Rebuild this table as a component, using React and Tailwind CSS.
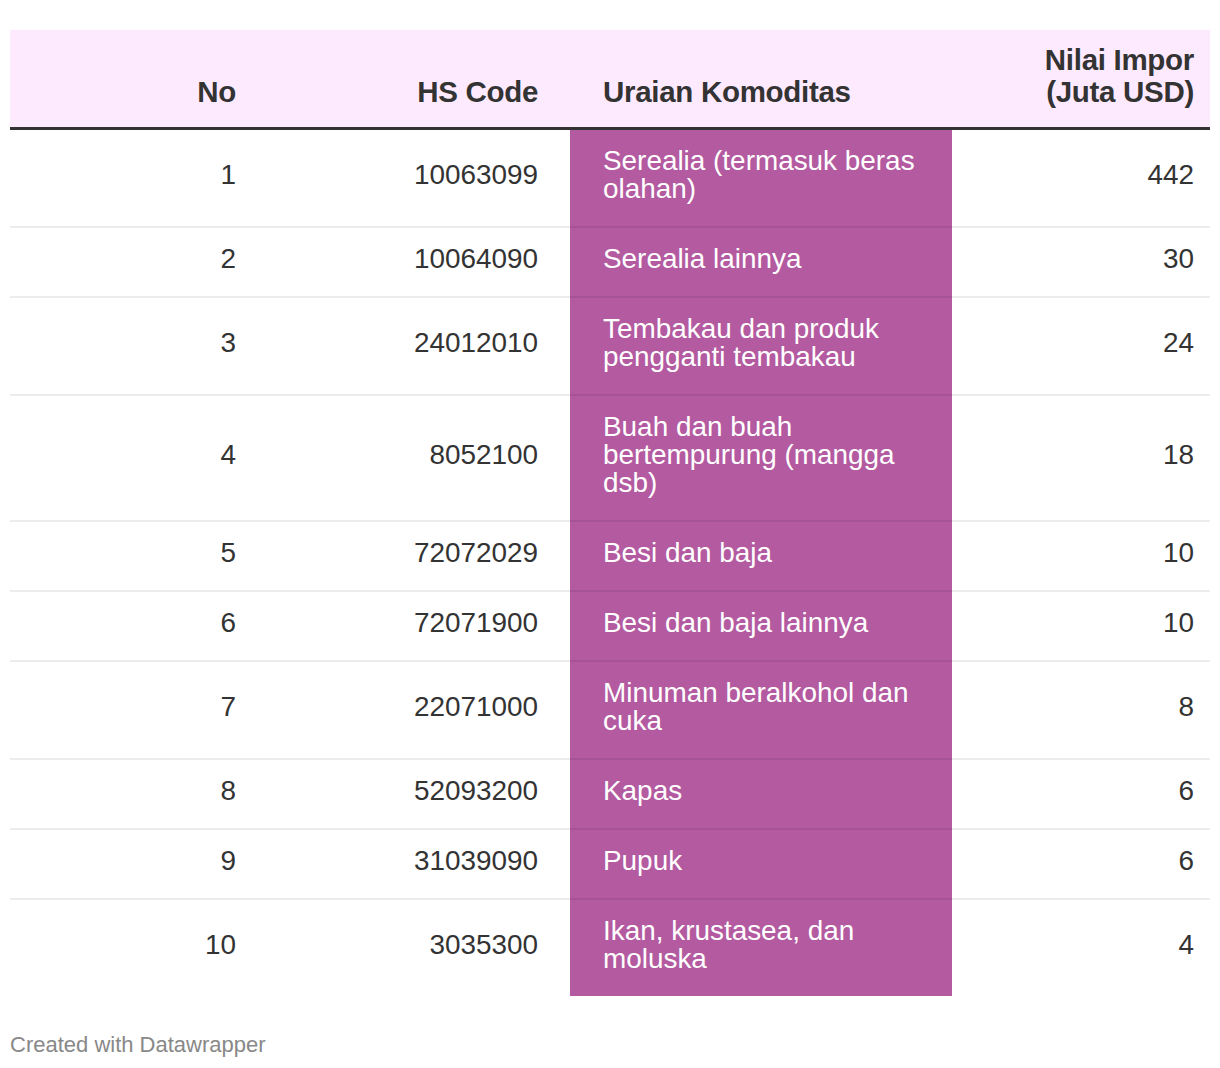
import React from "react";

const rows = [
  ["1", "10063099", "Serealia (termasuk beras olahan)", "442"],
  ["2", "10064090", "Serealia lainnya", "30"],
  ["3", "24012010", "Tembakau dan produk pengganti tembakau", "24"],
  ["4", "8052100", "Buah dan buah bertempurung (mangga dsb)", "18"],
  ["5", "72072029", "Besi dan baja", "10"],
  ["6", "72071900", "Besi dan baja lainnya", "10"],
  ["7", "22071000", "Minuman beralkohol dan cuka", "8"],
  ["8", "52093200", "Kapas", "6"],
  ["9", "31039090", "Pupuk", "6"],
  ["10", "3035300", "Ikan, krustasea, dan moluska", "4"],
];

export default function App() {
  return (
    <div
      className="w-[1220px] h-[1068px] bg-white pt-[30px] px-[10px] text-[#333]"
      style={{ fontFamily: '"Liberation Sans", Arial, sans-serif' }}
    >
      <div className="w-[1200px]">
        <div className="flex items-end h-[97px] bg-[#feeafe] border-b-[3px] border-[#333] box-content font-bold text-[29.5px] leading-[32px] tracking-[-0.3px]">
          <div className="w-[242px] text-right pr-[16px] pb-[19px]">No</div>
          <div className="w-[318px] text-right pr-[32px] pb-[19px]">HS Code</div>
          <div className="w-[382px] pl-[33px] pb-[19px]">Uraian Komoditas</div>
          <div className="w-[258px] text-right pr-[16px] pb-[19px]">
            Nilai Impor
            <br />
            (Juta USD)
          </div>
        </div>
        {rows.map((r, i) => {
          const last = i === rows.length - 1;
          const b = last ? "" : "border-b-2 border-[rgba(0,0,0,0.075)]";
          return (
            <div key={i} className="flex text-[27.9px] leading-[28px]">
              <div className={`w-[242px] flex items-center justify-end pr-[16px] pt-[17px] pb-[23px] ${b}`}>{r[0]}</div>
              <div className={`w-[318px] flex items-center justify-end pr-[32px] pt-[17px] pb-[23px] ${b}`}>{r[1]}</div>
              <div className={`w-[382px] flex items-center pl-[33px] pr-[20px] pt-[17px] pb-[23px] bg-[#b35aa0] text-white ${b}`}>{r[2]}</div>
              <div className={`w-[258px] flex items-center justify-end pr-[16px] pt-[17px] pb-[23px] ${b}`}>{r[3]}</div>
            </div>
          );
        })}
        <div className="mt-[36px] text-[22px] leading-[26px] text-[#888]">Created with Datawrapper</div>
      </div>
    </div>
  );
}
